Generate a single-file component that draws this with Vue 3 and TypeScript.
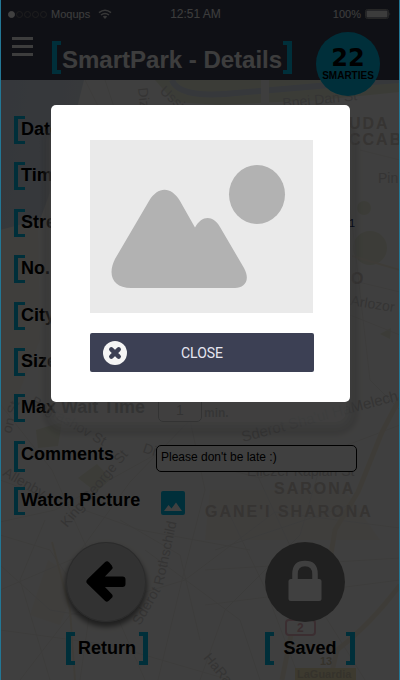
<script setup lang="ts">
import { ref } from 'vue'

interface Field {
  id: string
  label: string
  value: string
}

const fields = ref<Field[]>([
  { id: 'date', label: 'Date', value: '' },
  { id: 'time', label: 'Time', value: '' },
  { id: 'street', label: 'Street', value: '1' },
  { id: 'number', label: 'No.', value: '' },
  { id: 'city', label: 'City', value: '' },
  { id: 'size', label: 'Size', value: '' },
])
const maxWait = ref('1')
const comments = ref("Please don't be late :)")
const pictureOpen = ref(true)
</script>

<template>
  <div class="screen">
    <header class="top">
      <div class="status">
        <div class="carrier">
          <span class="dots"><i class="on"></i><i></i><i></i><i></i><i></i></span>
          <span>Moqups</span>
          <svg class="wifi" viewBox="0 0 14 10" aria-hidden="true">
            <path d="M1 3.6Q7-1.2 13 3.6M3 6Q7 2.8 11 6" fill="none" stroke="#e0e0e0" stroke-width="1.5" />
            <path d="M4.8 7.6Q7 6 9.2 7.6L7 10z" fill="#e0e0e0" />
          </svg>
        </div>
        <span class="clock">12:51 AM</span>
        <div class="power">
          <span>100%</span>
          <svg viewBox="0 0 26 10" aria-hidden="true">
            <rect x="0.5" y="0.5" width="23" height="9" rx="2" fill="none" stroke="#999" />
            <rect x="1.500" y="1.500" width="21" height="7" rx="1" fill="#f0f0f0" />
            <path d="M24.500 3.200Q26 5 24.500 6.800z" fill="#bbb" />
          </svg>
        </div>
      </div>
      <div class="bar">
        <button class="menu" aria-label="Menu"><i></i><i></i><i></i></button>
        <h1 class="bracketed title">SmartPark - Details</h1>
        <div class="badge"><strong>22</strong><span>SMARTIES</span></div>
      </div>
    </header>

    <main class="content">
      <svg class="map" viewBox="0 0 400 600" preserveAspectRatio="xMidYMin slice" aria-hidden="true">
        <defs>
          <linearGradient id="sea" x1="0" y1="0" x2="1" y2="0.35">
            <stop offset="0" stop-color="#d2dbe9" />
            <stop offset="1" stop-color="#dbe2ec" />
          </linearGradient>
        </defs>
        <rect width="400" height="600" fill="#fcfbf9" />
        <path d="M0 0H84L72 48L48 118L18 200L0 225z" fill="url(#sea)" />
        <path d="M155 0H400V12L320 20L220 25L174 22z" fill="#ecf0dc" />
        <path d="M172 0Q178 17 225 14L330 5L400 0" fill="none" stroke="#d5deea" stroke-width="6" />
        <g fill="#edf0dd">
          <circle cx="370" cy="168" r="17" />
          <circle cx="364" cy="128" r="7" />
          <path d="M78 398L97 384L111 399L96 412z" />
          <path d="M36 350L62 342L58 366L38 368z" />
          <path d="M380 254L391 248L390 259z" />
        </g>
        <g fill="#faf6f0">
          <path d="M0 150L38 140L40 260L12 330L0 330z" />
          <path d="M210 410H345L380 460H205z" />
          <path d="M48 480L78 500L60 545L30 535z" />
        </g>
        <g fill="none" stroke="#f0efec" stroke-width="1">
          <path d="M0 324L52 390L110 520L145 600M0 442L55 430L160 372L260 398L400 345" />
          <path d="M0 510L75 478L130 402L190 340M20 600L70 535L185 500L275 432L400 448" />
          <path d="M158 600L182 500L205 410L190 340M200 600L225 530L300 455L325 370" />
          <path d="M0 550L110 565L230 600M45 440L20 500L50 600M120 440L180 475L200 560" />
          <path d="M225 425L265 508L300 600M255 390L315 520L365 600M350 125L370 300L400 330" />
          <path d="M205 490L400 478M205 525L400 500M215 470L350 425M0 400L140 450L250 470" />
          <path d="M85 0L100 30M105 0L115 30M360 70L400 80M350 200L400 212M350 235L400 255" />
          <path d="M80 600L90 530L50 470L0 455M145 470L240 540L260 600M0 485L50 530L110 540" />
        </g>
        <g fill="none" stroke="#f7f0e0" stroke-width="5">
          <path d="M400 318L382 352L358 412L335 450L330 480M400 505Q370 545 337 570L330 600M282 600L292 550" />
          <path d="M52 462L70 530L75 600" stroke-width="2" />
          <path d="M352 176L400 190" stroke-width="2" />
        </g>
        <path d="M265 0V25" stroke="#f5f5f5" stroke-width="8" />
        <g class="streets">
          <text transform="translate(138 8) rotate(84)">Dizengoff</text>
          <text transform="translate(159 12) rotate(42)">Ussishkin</text>
          <text transform="translate(283 28) rotate(-6)">Bnei Dan St</text>
          <text x="378" y="103">Pin</text>
          <text transform="translate(350 225) rotate(9)">Arlozor</text>
          <text class="avenue" transform="translate(243 362) rotate(-15)">Sderot Sha'ul HaMelech</text>
          <text transform="translate(11 354) rotate(-75)">on St</text>
          <text transform="translate(30 324) rotate(30)">Bograshov St</text>
          <text x="247" y="396">Eliezer Kaplan St</text>
          <text transform="translate(142 372) rotate(18)">Di</text>
          <text transform="translate(67 448) rotate(-50)">King George St</text>
          <text transform="translate(2 395) rotate(30)">Allenby</text>
          <text transform="translate(140 546) rotate(-60)">Sderot</text>
          <text transform="translate(163 506) rotate(-78)">Rothschild</text>
          <text transform="translate(203 578) rotate(50)">HaRa</text>
        </g>
        <g class="areas">
          <text x="349" y="49">UDA</text>
          <text x="349" y="65">CCAB</text>
          <text x="351" y="204">O</text>
          <text x="274" y="414">SARONA</text>
          <text x="205" y="437">GANE'I SHARONA</text>
        </g>
        <g class="road">
          <rect x="286" y="540" width="29" height="15" rx="3" fill="#fff" stroke="#e9b9c2" stroke-width="2" />
          <text x="297" y="552">2</text>
          <rect x="295" y="588" width="61" height="12" fill="#f3e6bd" />
          <text x="320" y="585" class="tan">13</text>
          <text x="297" y="598" class="tan">LaGuardia</text>
        </g>
      </svg>

      <form class="form" @submit.prevent>
        <div class="panel"></div>
        <div v-for="f in fields" :key="f.id" class="row">
          <label :for="f.id">{{ f.label }}</label>
          <input :id="f.id" v-model="f.value" class="plain" type="text" />
        </div>
        <div class="row">
          <label for="wait">Max Wait Time</label>
          <span class="wait"><input id="wait" v-model="maxWait" type="text" /><span>min.</span></span>
        </div>
        <div class="row">
          <label for="comments">Comments</label>
          <textarea id="comments" v-model="comments" rows="1"></textarea>
        </div>
        <div class="row">
          <label for="picture">Watch Picture</label>
          <button id="picture" class="picture" type="button" @click="pictureOpen = true">
            <svg viewBox="0 0 24 24" aria-hidden="true">
              <rect width="24" height="24" rx="2" fill="#00bbe8" />
              <path d="M3 20L7.500 14L10.500 17.500L15 11.500L21 20z" fill="#fff" />
            </svg>
          </button>
        </div>
      </form>

      <nav class="actions">
        <button class="action">
          <span class="disc back">
            <svg viewBox="0 0 80 80" aria-hidden="true">
              <path d="M23.500 39.500L41 22.500L43.500 25.500L32 37.500H56.500V42H32L43.500 54L41 56.500z" stroke="#000" stroke-width="6" stroke-linejoin="round" />
            </svg>
          </span>
          <span class="bracketed caption">Return</span>
        </button>
        <button class="action saved">
          <span class="disc lock">
            <svg viewBox="0 0 80 80" aria-hidden="true">
              <path d="M30 39V32Q30 21.500 40 21.500T50 32V39" fill="none" stroke="#fff" stroke-width="5.500" />
              <rect x="23.500" y="37" width="33" height="22" rx="2.500" fill="#fff" />
            </svg>
          </span>
          <span class="bracketed caption">Saved</span>
        </button>
      </nav>
    </main>

    <div v-if="pictureOpen" class="overlay">
      <section class="modal" role="dialog" aria-modal="true" aria-label="Picture">
        <svg class="photo" viewBox="0 0 223 173" role="img" aria-label="Parking picture">
          <rect width="223" height="173" fill="#eaeaea" />
          <path d="M41 148C23 148 17 135 25 119L59 61C68 46 81 46 90 61L105 87.500C112 75 123 75 130 87L154 128C161 141 154 148 145 148z" fill="#b2b2b2" />
          <ellipse cx="167" cy="54.500" rx="28" ry="29.500" fill="#b2b2b2" />
        </svg>
        <button class="close" @click="pictureOpen = false">
          <svg viewBox="0 0 24 24" aria-hidden="true">
            <circle cx="12" cy="12" r="12" fill="#f5f5f5" />
            <path d="M8.300 8.300L15.700 15.700M15.700 8.300L8.300 15.700" stroke="#3c4054" stroke-width="4.500" stroke-linecap="round" />
          </svg>
          <span>CLOSE</span>
        </button>
      </section>
    </div>
  </div>
</template>

<style>
body {
  margin: 0;
}
</style>

<style scoped>
*,
*::before,
*::after {
  box-sizing: border-box;
}

.screen {
  position: relative;
  min-height: 100vh;
  display: flex;
  flex-direction: column;
  overflow: hidden;
  font-family: "Liberation Sans", Arial, sans-serif;
  color: #000;
}

button {
  padding: 0;
  border: 0;
  background: none;
  font: inherit;
  color: inherit;
  cursor: pointer;
}

svg {
  display: block;
}

.top {
  position: relative;
  z-index: 3;
  height: 80px;
  background: #3c4054;
  color: #f0f0f0;
}

.status {
  display: grid;
  grid-template-columns: 1fr auto 1fr;
  align-items: center;
  height: 28px;
  padding: 0 9px 0 8px;
  font-size: 11px;
}

.carrier,
.power {
  display: flex;
  align-items: center;
  gap: 4px;
}

.carrier .wifi {
  width: 14px;
  height: 10px;
  margin-left: 4px;
}

.power {
  justify-content: flex-end;
}

.power svg {
  width: 26px;
  height: 10px;
}

.clock {
  padding-right: 8px;
  font-size: 12px;
}

.dots {
  display: flex;
  flex: none;
  gap: 1px;
}

.dots i {
  flex: none;
  width: 7px;
  height: 7px;
  border: 1px solid #777;
  border-radius: 50%;
}

.dots .on {
  border-color: #fff;
  background: #fff;
}

.bar {
  display: flex;
  align-items: flex-start;
  height: 52px;
  padding: 4px 20px 0 12px;
}

.menu {
  display: grid;
  gap: 5px;
  width: 21px;
  margin-top: 5px;
}

.menu i {
  height: 3px;
  background: #f4f4f4;
}

.bracketed {
  display: flex;
  justify-content: space-between;
  align-items: center;
  height: 33px;
  white-space: nowrap;
}

.bracketed::before,
.bracketed::after {
  content: "";
  flex: none;
  width: 9px;
  height: 100%;
  border: solid #00bbe8;
  border-width: 4px 0 4px 5px;
}

.bracketed::after {
  border-width: 4px 5px 4px 0;
}

.title {
  align-items: flex-end;
  gap: 1px;
  margin: 9px 0 0 19px;
  font-size: 24px;
  line-height: 28px;
  color: #f4f4f4;
}

.badge {
  display: flex;
  flex-direction: column;
  align-items: center;
  width: 64px;
  height: 64px;
  margin-left: auto;
  padding-top: 14px;
  border-radius: 50%;
  background: #00bbe8;
  color: #000;
  font-size: 10px;
  font-weight: bold;
  line-height: 12px;
}

.badge strong {
  font: bold 24px/24px "DejaVu Sans", sans-serif;
}

.content {
  position: relative;
  flex: 1;
  padding: 36px 0 15px;
}

.map {
  position: absolute;
  inset: 0;
  width: 100%;
  height: 100%;
}

.streets text {
  font-size: 14px;
  fill: #d2d0cf;
}

.streets .avenue {
  font-size: 15px;
}

.areas text {
  font-size: 16px;
  font-weight: bold;
  letter-spacing: 2px;
  fill: #d5cdc8;
}

.road text {
  font-size: 12px;
  font-weight: bold;
  fill: #e2aeb7;
}

.road .tan {
  font-size: 11px;
  fill: #d1c8ad;
}

.form {
  position: relative;
  z-index: 0;
  display: flex;
  flex-direction: column;
  justify-content: space-between;
  min-height: 399px;
  padding: 0 43px 0 14px;
}

.panel {
  position: absolute;
  z-index: 1;
  top: 15px;
  right: 54px;
  bottom: 93px;
  left: 55px;
  border-radius: 10px;
  background: rgba(252, 252, 252, 0.8);
  box-shadow:
    0 0 0 3px rgba(250, 250, 250, 0.4),
    0 0 0 6px rgba(248, 248, 248, 0.3),
    0 0 0 9px rgba(244, 244, 244, 0.25),
    0 0 0 12px rgba(240, 240, 240, 0.2),
    0 1px 5px 12px rgba(0, 0, 0, 0.12);
}

.row {
  display: grid;
  grid-template-columns: 142px 1fr;
  height: 28px;
}

.row label {
  position: relative;
  padding-left: 7px;
  font-size: 18px;
  font-weight: bold;
  line-height: 26px;
  white-space: nowrap;
}

.row label::before {
  content: "";
  position: absolute;
  z-index: -1;
  inset: 0 auto 0 0;
  width: 11px;
  border: solid #00bbe8;
  border-width: 3px 0 3px 4px;
}

.plain {
  position: relative;
  z-index: 2;
  width: 100%;
  min-width: 0;
  padding: 0 2px;
  border: 0;
  background: none;
  font: 11px "Liberation Sans", Arial, sans-serif;
  color: #1c2c60;
  text-align: right;
}

.wait {
  display: flex;
  align-items: flex-end;
  gap: 2px;
  padding-left: 2px;
  font-size: 12px;
  font-weight: bold;
  line-height: 17px;
  color: #333;
}

.wait input {
  width: 44px;
  height: 28px;
  padding: 4px 0 0;
  border: 1px solid #000;
  border-radius: 5px;
  background: none;
  font: 14px "Liberation Sans", Arial, sans-serif;
  text-align: center;
}

textarea {
  width: 100%;
  height: 27px;
  margin-top: 4px;
  padding: 4px;
  border: 1px solid #000;
  border-radius: 5px;
  outline: 0;
  background: #fff;
  font: 12px/14px "Liberation Sans", Arial, sans-serif;
  color: #000;
  resize: none;
  overflow: hidden;
}

.picture {
  align-self: end;
  width: 24px;
  height: 24px;
  margin-left: 5px;
}

.actions {
  position: relative;
  display: flex;
  justify-content: space-between;
  padding: 27px 45px 0 66px;
}

.action {
  display: grid;
  gap: 10px;
  width: 82px;
}

.saved {
  width: 90px;
}

.disc {
  width: 80px;
  height: 80px;
  border-radius: 50%;
}

.back {
  background: #c8c8c8;
  box-shadow: 0 4px 5px 1px rgba(0, 0, 0, 0.5), inset 0 0 0 1px #aaa;
}

.lock {
  background: #808080;
}

.caption {
  font-size: 18px;
  font-weight: bold;
}

.overlay {
  position: absolute;
  z-index: 10;
  inset: 0;
  display: flex;
  justify-content: center;
  align-items: flex-start;
  padding: 105px 49px 0 50px;
  border: solid #237795;
  border-width: 0 1px;
  background: rgba(0, 0, 0, 0.75);
}

.modal {
  width: 100%;
  max-width: 420px;
  padding: 35px 36px 30px 39px;
  border-radius: 5px;
  background: #fff;
}

.photo {
  width: 100%;
  padding-right: 1px;
}

.close {
  display: grid;
  grid-template-columns: 24px 1fr 24px;
  align-items: center;
  width: 100%;
  height: 39px;
  margin-top: 20px;
  padding: 0 13px;
  border-radius: 2px;
  background: #3c4054;
  color: #e6e6f0;
  font: 14px Roboto, sans-serif;
}

.close svg {
  width: 24px;
  height: 24px;
}
</style>
